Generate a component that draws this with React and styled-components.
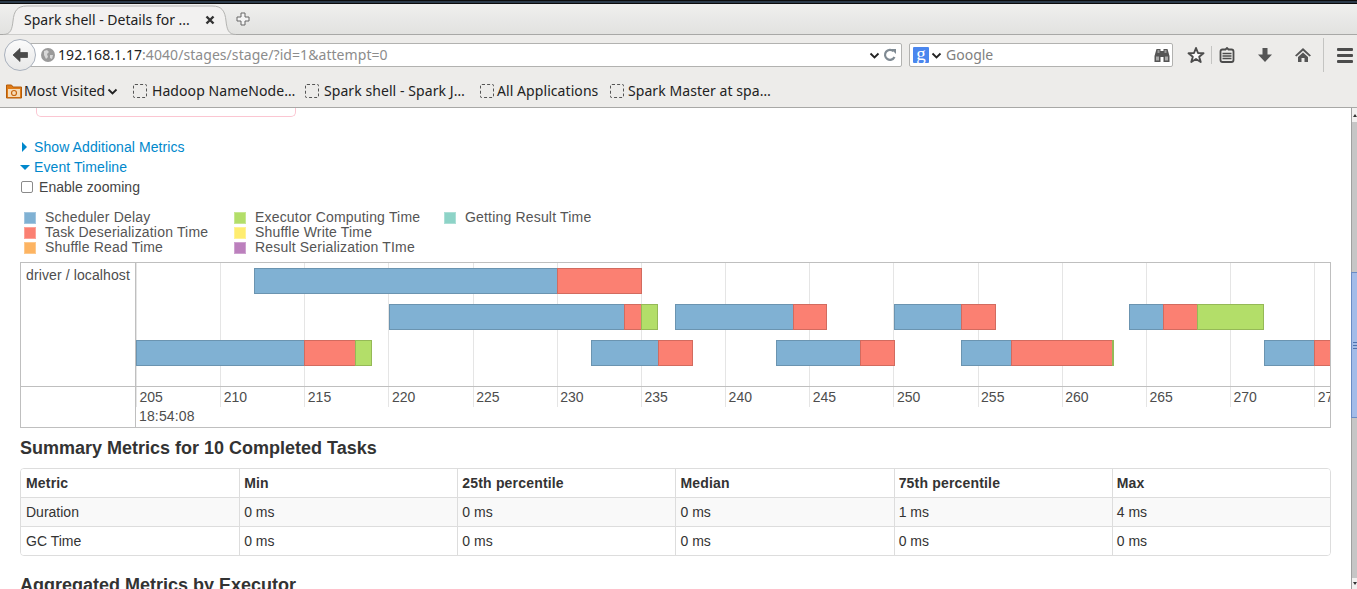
import React from 'react'
import styled, {createGlobalStyle} from 'styled-components'

const GlobalStyle = createGlobalStyle`
    html, body {
        margin: 0;
        padding: 0;
        background: #fff;
    }
    * {
        box-sizing: border-box;
    }
`

const SCALE = 16.833
const toX = (t) => Math.round((t - 205) * SCALE + 0.15)

const COLORS = {
    delay: ['#80b1d3', '#6b94b0'],
    deser: ['#fb8072', '#d26b5f'],
    exec: ['#b3de69', '#95b957'],
    result: ['#8dd3c7', '#76b0a6'],
    read: ['#fdb462', '#d39651'],
    write: ['#ffed6f', '#d5c65d'],
    serial: ['#bc80bd', '#9d6b9e'],
}

const legend = [
    ['delay', 'Scheduler Delay'],
    ['deser', 'Task Deserialization Time'],
    ['read', 'Shuffle Read Time'],
    ['exec', 'Executor Computing Time'],
    ['write', 'Shuffle Write Time'],
    ['serial', 'Result Serialization TIme'],
    ['result', 'Getting Result Time'],
]

// row, then delay start / deser start / exec start / end, in ms
const tasks = [
    [0, 212, 230, 235, 235],
    [1, 220, 234, 235, 236],
    [1, 237, 244, 246, 246],
    [1, 250, 254, 256, 256],
    [1, 264, 266, 268, 272],
    [2, 205, 215, 218, 219],
    [2, 232, 236, 238, 238],
    [2, 243, 248, 250, 250],
    [2, 254, 257, 263, 263.1],
    [2, 272, 275, 279, 279],
]

const ticks = [205, 210, 215, 220, 225, 230, 235, 240, 245, 250, 255, 260, 265, 270, 275]

const metrics = [
    ['Metric', 'Min', '25th percentile', 'Median', '75th percentile', 'Max'],
    ['Duration', '0 ms', '0 ms', '0 ms', '1 ms', '4 ms'],
    ['GC Time', '0 ms', '0 ms', '0 ms', '0 ms', '0 ms'],
]

const bookmarks = [
    ['Hadoop NameNode…', 172, 5],
    ['Spark shell - Spark J…', 175, 5],
    ['All Applications', 130, 3],
    ['Spark Master at spa…', 170, 4],
]

const Chevron = ({size = 11}) => (
    <svg width={size} height={size} viewBox="0 0 11 11">
        <path d="M1.5 3.5 L5.5 7.5 L9.5 3.5" fill="none" stroke="#222" strokeWidth="1.8" />
    </svg>
)

const App = () => {
    return (
        <Screen>
            <GlobalStyle />
            <TopEdge />
            <TabBar>
                <Tab>
                    <TabShape viewBox="0 0 233 30" preserveAspectRatio="none">
                        <path d="M0 29.5 C8 29.5 9 24 10 16 C11 6 14 1 24 1 L209 1 C219 1 222 6 223 16 C224 24 225 29.5 233 29.5" fill="#f2f1f0" stroke="#b4b4b2" strokeWidth="1" />
                    </TabShape>
                    <TabTitle>Spark shell - Details for ...</TabTitle>
                    <CloseIcon width="10" height="10" viewBox="0 0 10 10">
                        <path d="M1.5 1.5 L8.5 8.5 M8.5 1.5 L1.5 8.5" stroke="#333" strokeWidth="2.4" />
                    </CloseIcon>
                </Tab>
                <NewTab>
                    <svg width="14" height="14" viewBox="0 0 14 14">
                        <path d="M5 1 H9 V5 H13 V9 H9 V13 H5 V9 H1 V5 H5 Z" fill="#f4f4f4" stroke="#666" strokeWidth="1" />
                    </svg>
                </NewTab>
            </TabBar>
            <Toolbar>
                <NavRow>
                    <BackButton>
                        <svg width="18" height="16" viewBox="0 0 18 16">
                            <path d="M9 1.5 L2 8 L9 14.5 V10.5 H16.5 V5.5 H9 Z" fill="#4a4a4a" stroke="#4a4a4a" strokeWidth="0.8" strokeLinejoin="round" />
                        </svg>
                    </BackButton>
                    <UrlBar>
                        <svg width="14" height="14" viewBox="0 0 14 14">
                            <circle cx="7" cy="7" r="7" fill="#9a9a9a" />
                            <path d="M3 3 L6 2 L8 4 L6 6 L7 9 L5 11 L3 7 Z M9 7 L12 7 L11 11 L9 10 Z" fill="#d8d8d8" />
                        </svg>
                        <UrlText><b>192.168.1.17</b>:4040/stages/stage/?id=1&amp;attempt=0</UrlText>
                        <Chevron />
                        <svg width="14" height="14" viewBox="0 0 14 14">
                            <path d="M11.5 9 A5 5 0 1 1 10.5 3.2" fill="none" stroke="#7f8a93" strokeWidth="2.2" />
                            <path d="M8 1 L13 1 L13 6 Z" fill="#7f8a93" />
                        </svg>
                    </UrlBar>
                    <SearchBar>
                        <EngineIcon>g</EngineIcon>
                        <Chevron />
                        <SearchText>Google</SearchText>
                        <svg width="16" height="16" viewBox="0 0 16 16">
                            <path d="M2.5 2 H6.5 V4 H9.5 V2 H13.5 L15.5 9 V15 H9.5 V10 H6.5 V15 H0.5 V9 Z" fill="#555" />
                            <rect x="2" y="9.5" width="3" height="4" fill="#aaa" />
                            <rect x="11" y="9.5" width="3" height="4" fill="#aaa" />
                            <rect x="3.5" y="3" width="2" height="3" fill="#999" />
                            <rect x="10.5" y="3" width="2" height="3" fill="#999" />
                        </svg>
                    </SearchBar>
                    <ToolButton $w={30}>
                        <svg width="18" height="18" viewBox="0 0 18 18">
                            <path d="M9 2 L11 7 L16.5 7.3 L12.2 10.7 L13.7 16 L9 13 L4.3 16 L5.8 10.7 L1.5 7.3 L7 7 Z" fill="#fbfbfb" stroke="#4c4c4c" strokeWidth="1.9" strokeLinejoin="round" />
                        </svg>
                    </ToolButton>
                    <ToolDivider />
                    <ToolButton $w={30}>
                        <svg width="16" height="16" viewBox="0 0 16 16">
                            <path d="M5.5 2.5 H6.5 L8 1 L9.5 2.5 H12.5 Q14.5 2.5 14.5 4.5 V13 Q14.5 15 12.5 15 H3.5 Q1.5 15 1.5 13 V4.5 Q1.5 2.5 3.5 2.5 Z" fill="#ececea" stroke="#4c4c4c" strokeWidth="1.8" />
                            <path d="M3.5 6.5 H12.5 M3.5 9 H12.5 M3.5 11.5 H12.5" stroke="#4c4c4c" strokeWidth="1.3" />
                        </svg>
                    </ToolButton>
                    <ToolButton $w={46}>
                        <svg width="16" height="16" viewBox="0 0 16 16">
                            <path d="M5.5 1 H10.5 V7.5 H15 L8 15 L1 7.5 H5.5 Z" fill="#555" />
                        </svg>
                    </ToolButton>
                    <ToolButton $w={30}>
                        <svg width="18" height="16" viewBox="0 0 18 16">
                            <path d="M9 1 L17 8.5 L15.5 9.5 L9 3.7 L2.5 9.5 L1 8.5 Z" fill="#555" />
                            <path d="M9 5.5 L14 10 V15 H10.5 V11 H7.5 V15 H4 V10 Z" fill="#555" />
                        </svg>
                    </ToolButton>
                    <ToolDivider $tall $left={5} />
                    <MenuButton>
                        <MenuLine />
                        <MenuLine />
                        <MenuLine />
                    </MenuButton>
                </NavRow>
                <BookmarkRow>
                    <FolderItem>
                        <svg width="16" height="16" viewBox="0 0 16 16">
                            <path d="M0.5 2 H5.5 L7 4 H15.5 V15 H0.5 Z" fill="#e07b16" stroke="#b35c0a" />
                            <rect x="2" y="6" width="12" height="8" fill="#f6dcb8" />
                            <circle cx="8" cy="10" r="2.5" fill="none" stroke="#c8660f" strokeWidth="1.2" />
                        </svg>
                        <BookmarkText>Most Visited</BookmarkText>
                        <Chevron />
                    </FolderItem>
                    {bookmarks.map(([name, width, gap]) => (
                        <BookmarkItem key={name} $w={width} $gap={gap}>
                            <BlankIcon />
                            <BookmarkText>{name}</BookmarkText>
                        </BookmarkItem>
                    ))}
                </BookmarkRow>
            </Toolbar>
            <Viewport>
                <Page>
                    <AlertEdge />
                    <Expander>
                        <ArrowRight />
                        Show Additional Metrics
                    </Expander>
                    <Expander>
                        <ArrowDown />
                        Event Timeline
                    </Expander>
                    <ZoomRow>
                        <CheckBox />
                        Enable zooming
                    </ZoomRow>
                    <Legend>
                        {legend.map(([key, label]) => (
                            <LegendItem key={key}>
                                <Swatch $kind={key} />
                                {label}
                            </LegendItem>
                        ))}
                    </Legend>
                    <Timeline>
                        <Label>driver / localhost</Label>
                        <Canvas>
                            {tasks.map(([row, a, b, c, d]) => (
                                <React.Fragment key={`${row}-${a}`}>
                                    <Segment $row={row} $kind="delay" style={{left: toX(a), width: toX(b) - toX(a) + 1}} />
                                    <Segment $row={row} $kind="deser" style={{left: toX(b), width: toX(c) - toX(b) + 1}} />
                                    {d > c && <Segment $row={row} $kind="exec" style={{left: toX(c), width: Math.max(toX(d) - toX(c), 1)}} />}
                                </React.Fragment>
                            ))}
                        </Canvas>
                        <AxisSpacer />
                        <Axis>
                            <Ticks>
                                {ticks.map(t => <Tick key={t}>{t}</Tick>)}
                            </Ticks>
                            <AxisDate>18:54:08</AxisDate>
                        </Axis>
                    </Timeline>
                    <Heading>Summary Metrics for 10 Completed Tasks</Heading>
                    <TableFrame>
                        <Table>
                            <tbody>
                                {metrics.map((row, i) => (
                                    <Row key={row[0]} $head={i === 0} $odd={i === 1}>
                                        {row.map((cell, j) => <Cell key={j}>{cell}</Cell>)}
                                    </Row>
                                ))}
                            </tbody>
                        </Table>
                    </TableFrame>
                    <NextHeading>Aggregated Metrics by Executor</NextHeading>
                </Page>
                <Scrollbar>
                    <ScrollEnd $h={14} />
                    <ScrollGap $h={150} />
                    <ScrollThumb>
                        <ScrollGrip />
                    </ScrollThumb>
                    <ScrollGap $grow />
                    <ScrollEnd $h={11} $down />
                </Scrollbar>
            </Viewport>
        </Screen>
    )
}

export default App


const Screen = styled.div`
    width: 1357px;
    height: 589px;
    overflow: hidden;
    display: flex;
    flex-direction: column;
    font-family: "Liberation Sans", Arial, sans-serif;
`

const TopEdge = styled.div`
    height: 4px;
    flex: none;
    background: linear-gradient(#0c0c0c 0 1px, #2b3a4a 1px 3px, #0a0a0a 3px);
`

const TabBar = styled.div`
    height: 31px;
    flex: none;
    display: flex;
    align-items: flex-end;
    padding-left: 3px;
    background: linear-gradient(#efefee, #e2e2e0);
    border-bottom: 1px solid #a8a8a6;
`

const Tab = styled.div`
    position: relative;
    width: 233px;
    height: 30px;
    margin-bottom: -1px;
    padding: 0 21px 0 21px;
    display: flex;
    align-items: center;
    justify-content: space-between;
`

const TabShape = styled.svg`
    position: absolute;
    left: 0;
    top: 0;
    width: 100%;
    height: 100%;
`

const CloseIcon = styled.svg`
    position: relative;
`

const TabTitle = styled.span`
    position: relative;
    padding-bottom: 2px;
    font: 14px "Noto Sans", sans-serif;
    color: #222;
    white-space: nowrap;
`

const NewTab = styled.div`
    height: 30px;
    display: flex;
    align-items: center;
`

const Toolbar = styled.div`
    height: 73px;
    flex: none;
    background: #edecea;
    border-bottom: 1px solid #a8a8a6;
`

const NavRow = styled.div`
    height: 40px;
    padding-left: 4px;
    display: flex;
    align-items: center;
`

const BackButton = styled.div`
    position: relative;
    z-index: 1;
    width: 32px;
    height: 32px;
    flex: none;
    border-radius: 50%;
    border: 1px solid #a9b1bd;
    background: linear-gradient(#fbfbfb, #e8e8e8);
    display: flex;
    align-items: center;
    justify-content: center;
`

const UrlBar = styled.div`
    width: 872px;
    height: 24px;
    flex: none;
    margin-left: -6px;
    padding: 0 4px 0 10px;
    display: flex;
    align-items: center;
    gap: 3px;
    background: #fff;
    border: 1px solid #b2b2b0;
    border-radius: 0 2px 2px 0;
`

const UrlText = styled.div`
    flex: 1;
    padding-bottom: 2px;
    font: 14px "Noto Sans", sans-serif;
    letter-spacing: 0.06px;
    color: #8c8c8c;
    white-space: nowrap;

    b {
        font-weight: 400;
        color: #222;
    }
`

const SearchBar = styled.div`
    width: 264px;
    height: 24px;
    flex: none;
    margin: 0 8px 0 7px;
    padding: 0 2px 0 3px;
    display: flex;
    align-items: center;
    background: #fff;
    border: 1px solid #b2b2b0;
    border-radius: 2px;
`

const EngineIcon = styled.span`
    width: 16px;
    height: 16px;
    margin-right: 2px;
    border-radius: 1px;
    background: #4a86ee;
    color: #fff;
    font: 19px/13px "Liberation Serif", serif;
    text-align: center;
`

const SearchText = styled.span`
    flex: 1;
    margin-left: 4px;
    padding-bottom: 2px;
    font: 14px "Noto Sans", sans-serif;
    color: #808080;
`

const ToolButton = styled.div`
    width: ${props => props.$w}px;
    height: 24px;
    flex: none;
    display: flex;
    align-items: center;
    justify-content: center;
`

const ToolDivider = styled.div`
    width: 1px;
    height: ${props => props.$tall ? 34 : 18}px;
    flex: none;
    margin-left: ${props => props.$left || 0}px;
    background: #c4c4c2;
`

const MenuButton = styled.div`
    width: 42px;
    flex: none;
    display: flex;
    flex-direction: column;
    align-items: center;
    gap: 3px;
`

const MenuLine = styled.span`
    width: 16px;
    height: 3px;
    border-radius: 1px;
    background: #4c4c4c;
`

const BookmarkRow = styled.div`
    height: 32px;
    padding-left: 6px;
    display: flex;
    align-items: center;
`

const FolderItem = styled.div`
    width: 127px;
    flex: none;
    display: flex;
    align-items: center;
    gap: 2px;
`

const BookmarkItem = styled.div`
    width: ${props => props.$w}px;
    flex: none;
    display: flex;
    align-items: center;
    gap: ${props => props.$gap}px;
`

const BlankIcon = styled.span`
    width: 14px;
    height: 14px;
    border: 1px dashed #555;
    border-radius: 2px;
`

const BookmarkText = styled.span`
    padding-bottom: 2px;
    font: 14px "Noto Sans", sans-serif;
    letter-spacing: 0.07px;
    color: #222;
    white-space: nowrap;
`

const Viewport = styled.div`
    flex: 1;
    min-height: 0;
    display: flex;
    justify-content: space-between;
`

const Page = styled.div`
    width: 1331px;
    padding-left: 20px;
    overflow: hidden;
    font-size: 14px;
    line-height: 20px;
    color: #333;
`

const AlertEdge = styled.div`
    width: 260px;
    height: 9px;
    margin: 0 0 20px 16px;
    border: 1px solid #fbc6d2;
    border-top: none;
    border-radius: 0 0 5px 5px;
`

const Expander = styled.div`
    height: 20px;
    padding-left: 14px;
    position: relative;
    color: #0088cc;
    letter-spacing: 0.09px;
    display: flex;
    align-items: center;
`

const ArrowRight = styled.span`
    position: absolute;
    left: 2px;
    top: 5px;
    border-left: 5px solid #0088cc;
    border-top: 5px solid transparent;
    border-bottom: 5px solid transparent;
`

const ArrowDown = styled.span`
    position: absolute;
    left: 0;
    top: 8px;
    border-top: 5px solid #0088cc;
    border-left: 5px solid transparent;
    border-right: 5px solid transparent;
`

const ZoomRow = styled.div`
    height: 20px;
    padding-left: 1px;
    display: flex;
    align-items: center;
    gap: 6px;
    color: #444;
    letter-spacing: 0.04px;
`

const CheckBox = styled.span`
    width: 12px;
    height: 12px;
    border: 1px solid #8a8a8a;
    border-radius: 2px;
    background: #fff;
`

const Legend = styled.div`
    margin: 13px 0 7px 4px;
    display: grid;
    grid-template-rows: repeat(3, 15px);
    grid-auto-flow: column;
    grid-auto-columns: 210px;
    justify-content: start;
`

const LegendItem = styled.div`
    display: flex;
    align-items: center;
    gap: 9px;
    line-height: 15px;
    letter-spacing: 0.18px;
    color: #555;
    white-space: nowrap;
`

const Swatch = styled.span`
    width: 12px;
    height: 12px;
    background: ${props => COLORS[props.$kind][0]};
    border: 1px solid rgba(255, 255, 255, 0.28);
`

const Timeline = styled.div`
    width: 1311px;
    height: 166px;
    display: grid;
    grid-template-columns: 115px 1fr;
    grid-template-rows: 124px 1fr;
    border: 1px solid #bfbfbf;
    color: #4d4d4d;
`

const Label = styled.div`
    padding: 2px 0 0 5px;
    border-right: 1px solid #bfbfbf;
    border-bottom: 1px solid #bfbfbf;
    letter-spacing: 0.11px;
    white-space: nowrap;
`

const Canvas = styled.div`
    position: relative;
    overflow: hidden;
    border-bottom: 1px solid #bfbfbf;
    background: repeating-linear-gradient(90deg, #e5e5e5 0 1px, transparent 1px 84.165px);
`

const Segment = styled.div`
    position: absolute;
    top: ${props => 5 + props.$row * 36}px;
    height: 26px;
    background: ${props => COLORS[props.$kind][0]};
    border: 1px solid ${props => COLORS[props.$kind][1]};
`

const AxisSpacer = styled.div`
    border-right: 1px solid #bfbfbf;
`

const Axis = styled.div`
    overflow: hidden;
`

const Ticks = styled.div`
    height: 20px;
    display: flex;
`

const Tick = styled.div`
    flex: 0 0 84.165px;
    padding-left: 2.5px;
    border-left: 1px solid #e5e5e5;
    line-height: 20px;
`

const AxisDate = styled.div`
    padding-left: 3px;
    letter-spacing: 0.15px;
    line-height: 18px;
`

const Heading = styled.h4`
    margin: 10px 0;
    font-size: 18px;
    line-height: 20px;
    font-weight: 700;
    color: #333;
`

const TableFrame = styled.div`
    width: 1311px;
    border: 1px solid #ddd;
    border-radius: 4px;
    overflow: hidden;
`

const Table = styled.table`
    width: 100%;
    table-layout: fixed;
    border-collapse: separate;
    border-spacing: 0;

    tr + tr td {
        border-top: 1px solid #ddd;
    }
`

const Row = styled.tr`
    font-weight: ${props => props.$head ? 700 : 400};
    letter-spacing: ${props => props.$head ? 0.18 : 0}px;
    background: ${props => props.$odd ? '#f9f9f9' : '#fff'};
`

const Cell = styled.td`
    padding: 4px 4px 4px 5px;
    line-height: 20px;

    & + & {
        padding-left: 4px;
        border-left: 1px solid #ddd;
    }
`

const NextHeading = styled(Heading)`
    margin: 19px 0 0;
`

const Scrollbar = styled.div`
    width: 6px;
    flex: none;
    display: flex;
    flex-direction: column;
    background: #c6c6c6;
    border-left: 1px solid #a0a0a0;
`

const ScrollEnd = styled.div`
    height: ${props => props.$h}px;
    flex: none;
    display: flex;
    align-items: center;
    justify-content: center;
    background: #f2f1f0;

    &::after {
        content: '';
        border-left: 2px solid transparent;
        border-right: 2px solid transparent;
        border-${props => props.$down ? 'top' : 'bottom'}: 3px solid #333;
    }
`

const ScrollGap = styled.div`
    height: ${props => props.$h ? `${props.$h}px` : 'auto'};
    flex: ${props => props.$grow ? 1 : 'none'};
`

const ScrollThumb = styled.div`
    height: 146px;
    flex: none;
    margin-left: -1px;
    display: flex;
    align-items: center;
    justify-content: center;
    background: #a3bce8;
    border: 1px solid #6a8cc4;
    border-right: none;
`

const ScrollGrip = styled.span`
    width: 4px;
    height: 7px;
    background: repeating-linear-gradient(#4e72ad 0 1px, transparent 1px 3px);
`
